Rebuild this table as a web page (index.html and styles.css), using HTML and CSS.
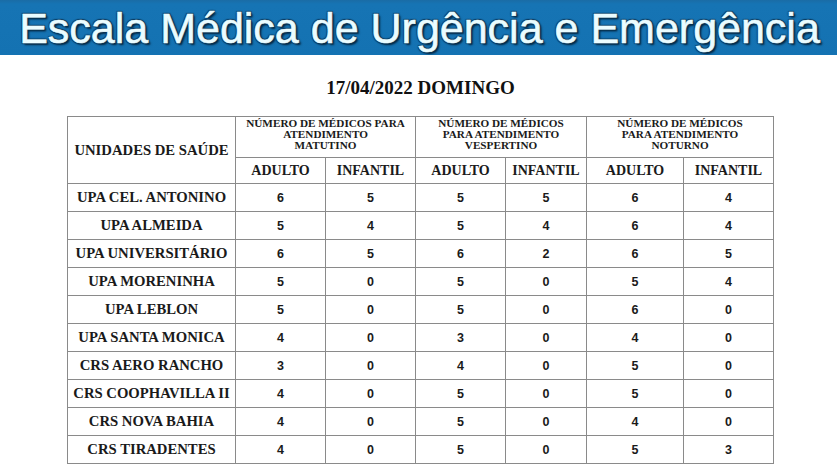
FILE: index.html
```
<!DOCTYPE html>
<html lang="pt-BR">
<head>
<meta charset="utf-8">
<title>Escala Médica de Urgência e Emergência</title>
<link rel="stylesheet" href="styles.css">
</head>
<body>
<header class="banner"><h1 class="banner-title">Escala Médica de Urgência e Emergência</h1></header>
<main class="content">
<h2 class="date">17/04/2022 DOMINGO</h2>
<table class="schedule">
<colgroup>
<col class="c-unit"><col class="c1"><col class="c2"><col class="c3"><col class="c4"><col class="c5"><col class="c6">
</colgroup>
<thead>
<tr class="h1">
<th rowspan="2" class="unit-head">UNIDADES DE SAÚDE</th>
<th colspan="2" class="group">NÚMERO DE MÉDICOS PARA<br>ATENDIMENTO<br>MATUTINO</th>
<th colspan="2" class="group">NÚMERO DE MÉDICOS<br>PARA ATENDIMENTO<br>VESPERTINO</th>
<th colspan="2" class="group">NÚMERO DE MÉDICOS<br>PARA ATENDIMENTO<br>NOTURNO</th>
</tr>
<tr class="h2">
<th>ADULTO</th><th>INFANTIL</th><th>ADULTO</th><th>INFANTIL</th><th>ADULTO</th><th>INFANTIL</th>
</tr>
</thead>
<tbody>
<tr><th>UPA CEL. ANTONINO</th><td>6</td><td>5</td><td>5</td><td>5</td><td>6</td><td>4</td></tr>
<tr><th>UPA ALMEIDA</th><td>5</td><td>4</td><td>5</td><td>4</td><td>6</td><td>4</td></tr>
<tr><th>UPA UNIVERSITÁRIO</th><td>6</td><td>5</td><td>6</td><td>2</td><td>6</td><td>5</td></tr>
<tr><th>UPA MORENINHA</th><td>5</td><td>0</td><td>5</td><td>0</td><td>5</td><td>4</td></tr>
<tr><th>UPA LEBLON</th><td>5</td><td>0</td><td>5</td><td>0</td><td>6</td><td>0</td></tr>
<tr><th>UPA SANTA MONICA</th><td>4</td><td>0</td><td>3</td><td>0</td><td>4</td><td>0</td></tr>
<tr><th>CRS AERO RANCHO</th><td>3</td><td>0</td><td>4</td><td>0</td><td>5</td><td>0</td></tr>
<tr><th>CRS COOPHAVILLA II</th><td>4</td><td>0</td><td>5</td><td>0</td><td>5</td><td>0</td></tr>
<tr><th>CRS NOVA BAHIA</th><td>4</td><td>0</td><td>5</td><td>0</td><td>4</td><td>0</td></tr>
<tr><th>CRS TIRADENTES</th><td>4</td><td>0</td><td>5</td><td>0</td><td>5</td><td>3</td></tr>
</tbody>
</table>
</main>
</body>
</html>
```
FILE: styles.css
```
html, body {
  margin: 0;
  padding: 0;
  background: #ffffff;
}
body {
  font-family: "Liberation Serif", "Times New Roman", serif;
  color: #111;
}
.banner {
  height: 55px;
  background: linear-gradient(#1a6ca6 0, #1674b4 4px, #1472b2 100%);
  display: flex;
  align-items: center;
  justify-content: center;
  overflow: hidden;
}
.banner-title {
  margin: 0;
  font-family: "Liberation Sans", Arial, sans-serif;
  font-weight: normal;
  font-size: 43px;
  color: #eafcff;
  white-space: nowrap;
  -webkit-text-stroke: 0.6px #eafcff;
  text-shadow: 1px 1px 1px #07304f, -1px -1px 1px #0b3d63, 1px -1px 1px #0b3d63, -1px 1px 1px #0b3d63, 2px 2px 2px #06263f;
  line-height: 1;
  padding-top: 2px;
  padding-left: 2px;
}
.content {
  display: flex;
  flex-direction: column;
  align-items: center;
}
.date {
  margin: 22px 0 0 4px;
  font-size: 19px;
  font-weight: bold;
  line-height: 22px;
  height: 39px;
}
.schedule {
  border-collapse: collapse;
  margin-left: 4px;
  table-layout: fixed;
  width: 707px;
}
.c-unit { width: 168px; }
.c1 { width: 90px; }
.c2 { width: 90px; }
.c3 { width: 90px; }
.c4 { width: 81px; }
.c5 { width: 97px; }
.c6 { width: 90px; }
.schedule th, .schedule td {
  border: 1px solid #8a8a8a;
  padding: 0;
  text-align: center;
  vertical-align: middle;
}
.schedule th {
  font-family: "Liberation Serif", "Times New Roman", serif;
  font-weight: bold;
  font-size: 14.7px;
  color: #1a1a1a;
  white-space: nowrap;
}
.h1 { height: 41px; }
.h1 .group {
  font-size: 11.2px;
  line-height: 11px;
  padding-top: 1px;
  vertical-align: top;
}
.h2 { height: 26px; }
.h2 th { font-size: 14px; }
.schedule tbody tr { height: 28px; }
.schedule td {
  font-family: "Liberation Sans", Arial, sans-serif;
  font-weight: bold;
  font-size: 12.5px;
  color: #1a1a1a;
}
```
